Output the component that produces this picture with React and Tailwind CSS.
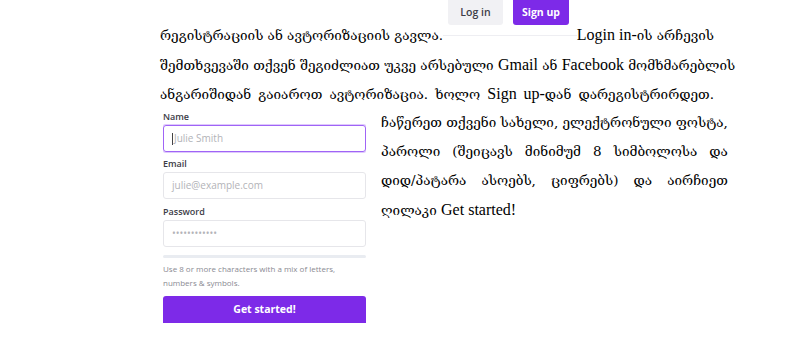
const serif = { fontFamily: '"DejaVu Serif", "Liberation Serif", serif' };

// Latin words are set a bit larger, as in the reference
const L = ({ children }) => (
  <span className="text-[16px]" style={{ fontFamily: '"Liberation Serif", serif' }}>
    {children}
  </span>
);

const Line = ({ children, last }) => (
  <div
    className={
      last
        ? "h-[29px] leading-[29px] whitespace-nowrap"
        : "h-[29px] leading-[29px] text-justify [text-align-last:justify] whitespace-nowrap"
    }
  >
    {children}
  </div>
);

const Field = ({ label, placeholder, focused, className = "" }) => (
  <div className={className}>
    <div className="text-[9px] leading-[12px] font-semibold text-[#3c3c46] mb-[2px]">{label}</div>
    <div
      className={
        focused
          ? "h-[27px] rounded-[3px] border border-[#a064f6] shadow-[0_0_0_1px_rgba(160,100,246,0.35)] flex items-center px-[8px] text-[10px] text-[#b3b3b8]"
          : "h-[27px] rounded-[3px] border border-[#e6e6ea] flex items-center px-[8px] text-[10px] text-[#b3b3b8]"
      }
    >
      {focused && <span className="w-px h-[12px] bg-[#444] mr-[1px]" />}
      {placeholder}
    </div>
  </div>
);

export default function App() {
  return (
    <div className="w-[800px] h-[347px] bg-white overflow-hidden">
      <div className="ml-[160px] w-[554px] text-[13.5px] text-black" style={serif}>
        <div className="flex h-[50px] items-end justify-between whitespace-nowrap">
          <span className="leading-[29px]">რეგისტრაციის ან ავტორიზაციის გავლა.</span>
          <div className="w-[140px] h-full flex flex-col" style={{ fontFamily: '"Open Sans", sans-serif' }}>
            <div className="flex gap-[10px] pl-[5px] h-[25px]">
              <div className="w-[55px] h-[25px] rounded-b-[3px] bg-[#f1f1f4] text-[#3d3d48] text-[10.5px] font-semibold flex items-center justify-center">
                Log in
              </div>
              <div className="w-[56px] h-[25px] rounded-b-[3px] bg-[#7d2ae8] text-white text-[10.5px] font-bold flex items-center justify-center">
                Sign up
              </div>
            </div>
            <div className="mt-[10px] h-px bg-[#eeeef2]" />
          </div>
          <span className="leading-[29px]">
            <L>Login in-</L>ის არჩევის
          </span>
        </div>
        <Line>
          შემთხვევაში თქვენ შეგიძლიათ უკვე არსებული <L>Gmail</L> ან <L>Facebook</L> მომხმარებლის
        </Line>
        <Line>
          ანგარიშიდან გაიაროთ ავტორიზაცია. ხოლო <L>Sign up-</L>დან დარეგისტრირდეთ.
        </Line>

        <div className="flex gap-[15px]">
          <div
            className="w-[203px] shrink-0 ml-[3px] h-[215px] overflow-hidden pt-[3px]"
            style={{ fontFamily: '"Open Sans", sans-serif' }}
          >
            <Field label="Name" placeholder="Julie Smith" focused />
            <Field label="Email" placeholder="julie@example.com" className="mt-[6px]" />
            <Field label="Password" placeholder="••••••••••••" className="mt-[7px]" />
            <div className="mt-[8px] h-[3px] bg-[#e9ecf1] rounded-full" />
            <div className="mt-[4px] text-[8px] leading-[14px] text-[#8a8a92] whitespace-nowrap">
              Use 8 or more characters with a mix of letters,
              <br />
              numbers &amp; symbols.
            </div>
            <div className="mt-[6px] h-[32px] rounded-[3px] bg-[#7d2ae8] text-white text-[10.5px] font-bold flex items-start pt-[6px] justify-center">
              Get started!
            </div>
          </div>
          <div className="flex-1">
            <Line>ჩაწერეთ თქვენი სახელი, ელექტრონული ფოსტა,</Line>
            <Line>პაროლი (შეიცავს მინიმუმ 8 სიმბოლოსა და</Line>
            <Line>დიდ/პატარა ასოებს, ციფრებს) და აირჩიეთ</Line>
            <Line last>
              ღილაკი <L>Get started!</L>
            </Line>
          </div>
        </div>
      </div>
    </div>
  );
}
